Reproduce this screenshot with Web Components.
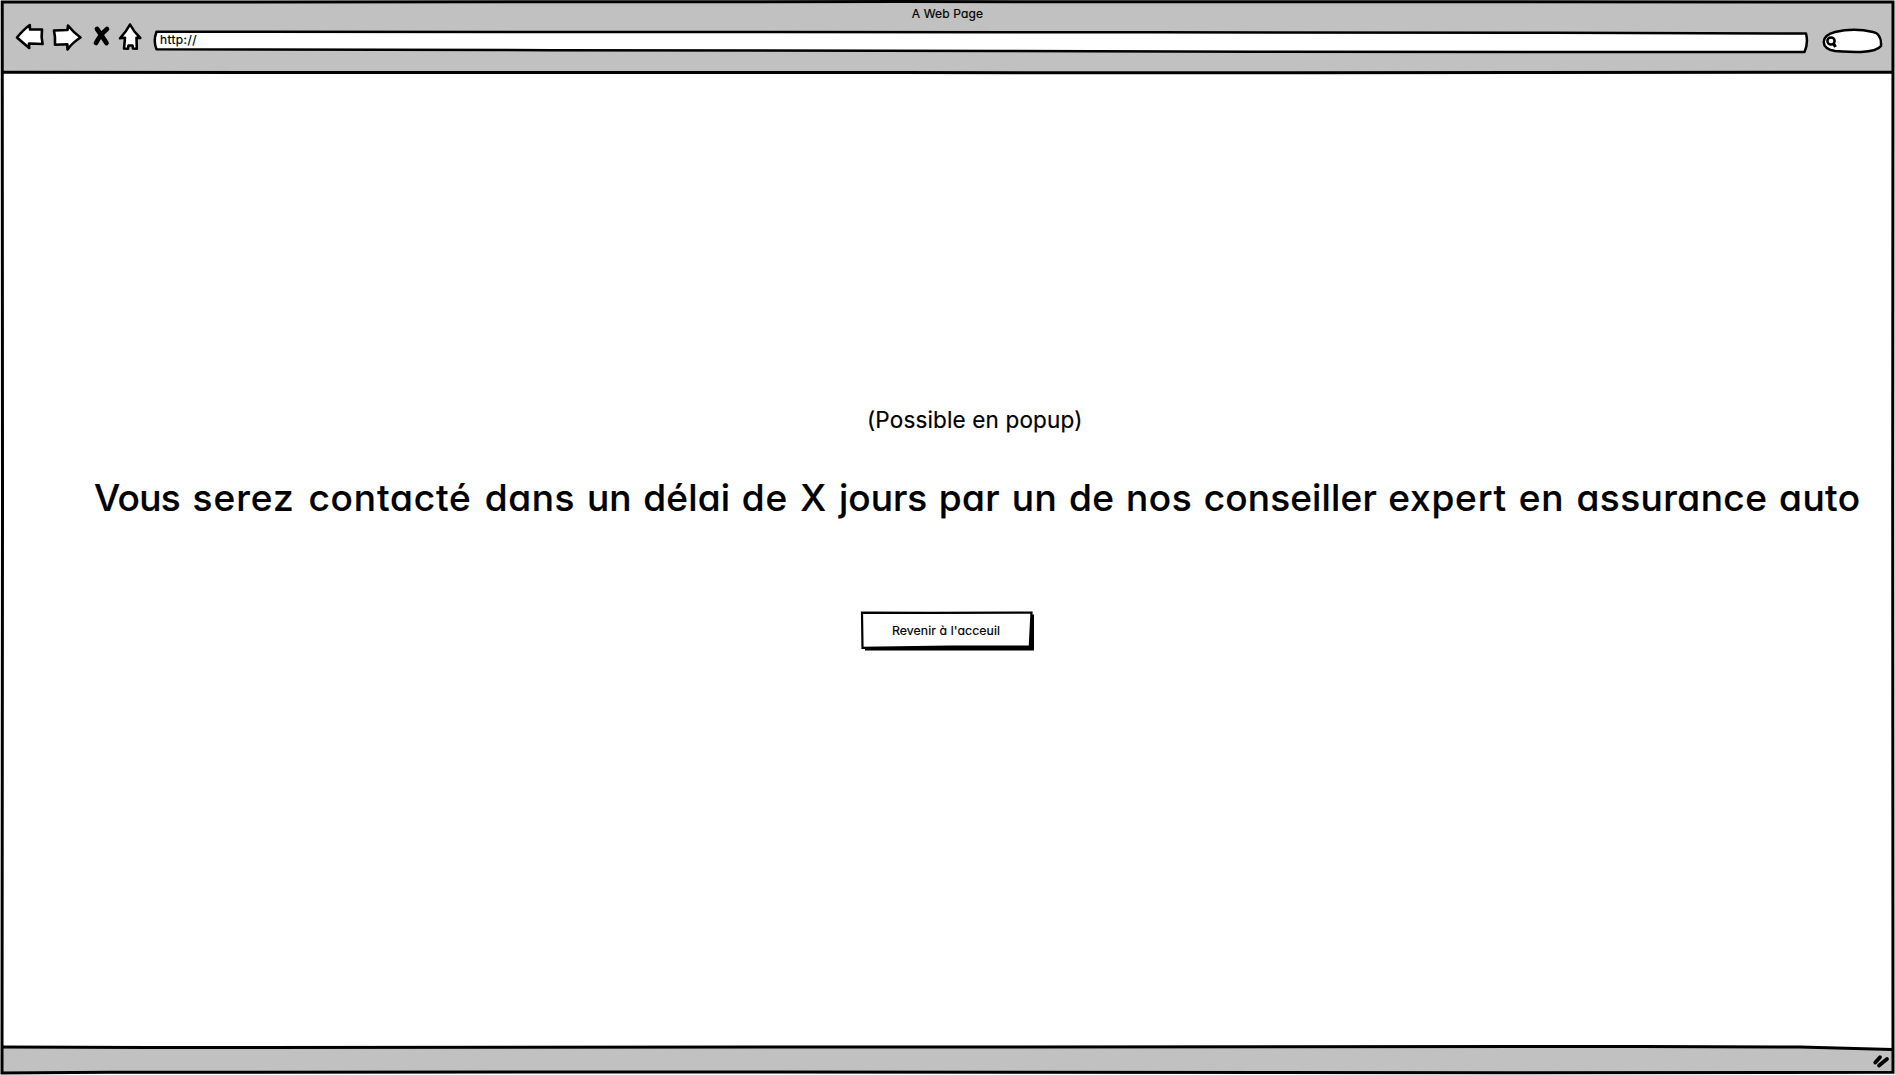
<!DOCTYPE html>
<html lang="fr">
<head>
<meta charset="utf-8">
<title>A Web Page</title>
<style>
html,body{margin:0;height:100%;overflow:hidden;background:#fff}
body{font-family:Inter,"Open Sans",sans-serif;font-feature-settings:"cv11";color:#000;-webkit-text-stroke:.2px #000}
</style>
</head>
<body>
<sketch-browser heading="A Web Page" url="http://">
  <sketch-text style="--size:22.5px;--weight:400;--ls:.15px;--ws:0px;--left:867px">(Possible en popup)</sketch-text>
  <sketch-text style="--size:37px;--weight:500;--ls:.45px;--ws:1.4px;--left:94px"><span style="letter-spacing:-.7px">Vous </span><span style="letter-spacing:1px;margin-left:2px">serez </span><span style="letter-spacing:.85px;margin-left:1.5px">contacté </span><span style="letter-spacing:.6px;margin-left:1px">dans </span><span style="letter-spacing:.2px">un délai </span><span style="letter-spacing:.8px">de X </span><span style="letter-spacing:.05px">jours </span>par un de nos <span style="letter-spacing:.15px">conseiller </span><span style="letter-spacing:.8px">expert en </span>assurance auto</sketch-text>
  <sketch-button>Revenir à l'acceuil</sketch-button>
</sketch-browser>
<script>
const make=(name,html,init)=>customElements.define(name,class extends HTMLElement{
  connectedCallback(){
    if(this.shadowRoot)return;
    this.attachShadow({mode:'open'}).innerHTML=html;
    if(init)init(this,this.shadowRoot);
  }
});

make('sketch-text',`<style>
:host{display:block;white-space:nowrap;font-size:var(--size);font-weight:var(--weight);letter-spacing:var(--ls);word-spacing:var(--ws);line-height:1.2;margin-left:var(--left)}
</style><slot></slot>`);

make('sketch-button',`<style>
:host{display:grid;width:176px;height:42px;margin:48px 0 0 860px}
svg,span{grid-area:1/1}
svg{display:block;overflow:visible}
span{display:flex;align-items:center;justify-content:center;font-size:12.3px;font-weight:400;letter-spacing:.1px;white-space:nowrap;padding:0 4px 3px 0}
</style>
<svg width="176" height="42"><path d="M5 3.500H174V39.400H5Z"/><path d="M2 1.600L70 1.900L171.500 1.600L169.800 35.600L90 35.600L2.500 36.800Z" fill="#fff" stroke="#000" stroke-width="2.200"/></svg>
<span><slot></slot></span>`);

make('sketch-nav',`<style>
:host{display:block;width:128px;height:28px}svg{display:block;overflow:visible}
</style>
<svg width="128" height="28" fill="#fff" stroke="#000" stroke-width="2.600" stroke-linejoin="round" stroke-linecap="round">
<path d="M2 14.500Q9 6 14.800 2L15 6.500L27 6.500Q26 14 27.600 21L14 20.500L14.200 25Q7 19 2 14.500Z"/>
<path d="M39 7.500L52.500 7L53 2.500Q59 10 65.500 14.500Q57 20 52.500 26.500L52.300 21.300L40 21.800Q40.500 14 39 7.500Z"/>
<path d="M82 6Q85 10 91.500 20M92 6Q85 12 81 20" stroke-width="4.700" fill="none"/>
<path d="M115 1.500Q119 9 125.300 15L121.500 14.800L121.800 25.700L118 25.500L117.500 22.500L113.500 22.500L113 25.700L109 25.500L110 14.800L105 15.300Q111 9 115 1.500Z"/>
</svg>`);

make('sketch-address',`<style>
:host{display:grid;height:24px;width:1656px}svg,span{grid-area:1/1}svg{display:block}
span{font-size:12px;font-weight:400;letter-spacing:.4px;line-height:16px;padding:2px 0 0 7px}
</style>
<svg width="1656" height="24" fill="#fff" stroke="#000" stroke-width="2.500" stroke-linejoin="round"><path d="M3.500 1.700L600 2L1000 2.300L1400 2.700L1653 3.500Q1655.500 13 1651.500 22L1100 21.800L850 21L400 20.200L3.500 19.300Q0 11 3.500 1.700Z"/></svg>
<span><slot></slot></span>`);

make('sketch-search',`<style>:host{display:block;width:62px;height:27px}svg{display:block}</style>
<svg width="62" height="27" fill="#fff" stroke="#000" stroke-width="2.500"><path d="M14 4Q33 -.500 52 4C58 5 60.500 11 60 18C57 22 49 23.500 40 24Q30 24 14 23C-1 20-1 8 14 4Z"/><circle cx="10" cy="13" r="3.600"/><path d="M12.500 15.500L14.500 19" stroke-width="3"/></svg>`);

make('sketch-grip',`<style>:host{display:block;width:18px;height:16px}svg{display:block}</style>
<svg width="18" height="16" stroke="#000" stroke-width="3.800" stroke-linecap="round"><path d="M3.300 8.500L8 3.200M7 11.500L15 5"/></svg>`);

make('sketch-browser',`<style>
:host{display:grid;width:1895px;height:1075px;grid-template-columns:1895px;grid-template-rows:1075px}
.frame,.page{grid-area:1/1}
.frame{display:block}
.page{display:flex;flex-direction:column;min-width:0}
header{height:73px;display:flex;flex-direction:column}
h1{margin:0;height:23px;font-size:12px;font-weight:400;line-height:15px;padding-top:6px;box-sizing:border-box;text-align:center;letter-spacing:.15px}
.bar{display:flex;align-items:flex-start;padding-left:15px}
sketch-address{margin:7px 0 0 10px}
sketch-search{margin:5px 0 0 12px}
main{height:974px;display:flex;flex-direction:column;padding-top:333px;box-sizing:border-box;gap:43px}
footer{height:28px;display:flex;justify-content:flex-end;padding:7px 5px 0 0;box-sizing:border-box}
</style>
<svg class="frame" width="1895" height="1075" stroke="#000" fill="none" stroke-width="3">
<path d="M2 2H1893V73H2Z M2 1047H1893V1073H2Z" fill="#c1c1c1" stroke="none"/>
<path d="M1735 1046L1893 1049.500V1040H1735Z" fill="#fff" stroke="none"/>
<path d="M2.200 2L900 1.600L1893 2L1892.700 500L1893 1072.300L1500 1072.700L700 1072L110 1072.300L2 1073L2.500 500Z"/>
<path d="M2 72.300L900 72.600L1300 72.800L1893 72.200M2 1047L150 1047.600L900 1047L1640 1046.500L1800 1047L1892 1049.500"/>
</svg>
<div class="page"><header><h1></h1><div class="bar"><sketch-nav></sketch-nav><sketch-address></sketch-address><sketch-search></sketch-search></div></header>
<main><slot></slot></main><footer><sketch-grip></sketch-grip></footer></div>`,(h,r)=>{
 r.querySelector('h1').textContent=h.getAttribute('heading');
 r.querySelector('sketch-address').textContent=h.getAttribute('url');
});
</script>
</body>
</html>
